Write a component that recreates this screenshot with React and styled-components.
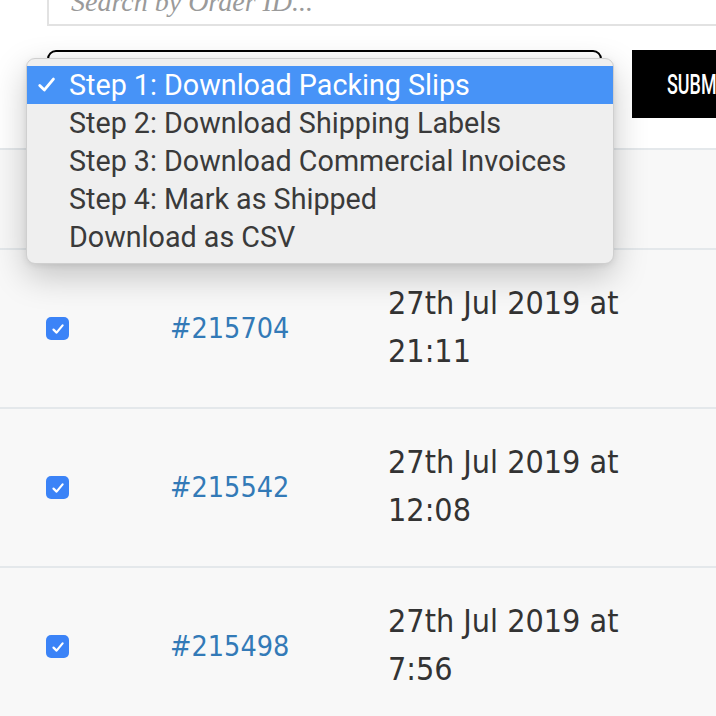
import React from 'react';
import styled, { createGlobalStyle } from 'styled-components';

const GlobalStyle = createGlobalStyle`
  html, body {
    margin: 0;
    padding: 0;
    background: #ffffff;
    overflow: hidden;
  }
  #root {
    width: 716px;
    height: 716px;
    overflow: hidden;
  }
`;

const actions = [
  'Step 1: Download Packing Slips',
  'Step 2: Download Shipping Labels',
  'Step 3: Download Commercial Invoices',
  'Step 4: Mark as Shipped',
  'Download as CSV',
];

const orders = [
  { id: '#215704', date: '27th Jul 2019 at 21:11' },
  { id: '#215542', date: '27th Jul 2019 at 12:08' },
  { id: '#215498', date: '27th Jul 2019 at 7:56' },
];

function CheckIcon({ color = '#fff', size = 14, weight = 2.2 }) {
  return (
    <svg width={size} height={size} viewBox="0 0 14 14" fill="none">
      <path d="M2.5 7.6 L5.6 10.6 L11.6 3.4" stroke={color} strokeWidth={weight} strokeLinecap="round" strokeLinejoin="round" />
    </svg>
  );
}

function App() {
  return (
    <Page>
      <GlobalStyle />
      <TopArea>
        <SearchInput placeholder="Search by Order ID..." />
        <ActionRow>
          <SelectWrap>
            <SelectBox />
            <Menu>
              {actions.map((a, i) => (
                <MenuItem key={a} selected={i === 0}>
                  {i === 0 && (
                    <Tick>
                      <CheckIcon size={21} weight={1.9} />
                    </Tick>
                  )}
                  {a}
                </MenuItem>
              ))}
            </Menu>
          </SelectWrap>
          <SubmitButton>
            <SubmitLabel>SUBMIT</SubmitLabel>
          </SubmitButton>
        </ActionRow>
      </TopArea>
      <Table>
        <HeaderRow />
        {orders.map((o) => (
          <Row key={o.id}>
            <Cell>
              <Checkbox>
                <CheckIcon />
              </Checkbox>
            </Cell>
            <Cell>
              <OrderLink href="#">{o.id}</OrderLink>
            </Cell>
            <DateCell>{o.date}</DateCell>
          </Row>
        ))}
      </Table>
    </Page>
  );
}

export default App;

const Page = styled.div`
  width: 716px;
  height: 716px;
  overflow: hidden;
  background: #f8f8f8;
  font-family: "DejaVu Sans Condensed", "DejaVu Sans", sans-serif;
`;

const TopArea = styled.div`
  background: #ffffff;
  padding: 0 0 30px 47px;
  margin-top: -30px;
`;

const SearchInput = styled.input`
  display: block;
  box-sizing: border-box;
  width: 720px;
  height: 56px;
  border: 2px solid #e2e2e2;
  background: #fff;
  padding: 8px 22px 0;
  font-family: "Liberation Serif", serif;
  font-style: italic;
  font-size: 28px;
  outline: none;
  &::placeholder {
    color: #9a9a9a;
  }
`;

const ActionRow = styled.div`
  display: flex;
  align-items: flex-start;
  margin-top: 24px;
  gap: 30px;
`;

const SelectWrap = styled.div`
  position: relative;
  width: 555px;
  height: 68px;
  flex-shrink: 0;
`;

const SelectBox = styled.div`
  box-sizing: border-box;
  width: 100%;
  height: 100%;
  border: 2px solid #000;
  border-radius: 9px;
  background: #fff;
`;

const Menu = styled.div`
  position: absolute;
  left: -21px;
  top: 8px;
  width: 588px;
  box-sizing: border-box;
  padding: 7px 0;
  background: #efefef;
  border: 1px solid #cfcfcf;
  border-radius: 9px;
  box-shadow: 0 12px 34px rgba(0, 0, 0, 0.22), 0 2px 6px rgba(0, 0, 0, 0.08);
  z-index: 10;
`;

const MenuItem = styled.div`
  position: relative;
  height: 38px;
  line-height: 38px;
  padding-left: 42px;
  font-family: Roboto, "Noto Sans", sans-serif;
  font-size: 28.7px;
  color: ${(p) => (p.selected ? '#ffffff' : '#3a3a3a')};
  background: ${(p) => (p.selected ? '#4793f7' : 'transparent')};
  white-space: nowrap;
`;

const Tick = styled.span`
  position: absolute;
  left: 9px;
  top: 8px;
  display: flex;
`;

const SubmitButton = styled.button`
  flex-shrink: 0;
  width: 140px;
  height: 68px;
  border: none;
  background: #000;
  color: #fff;
  text-align: left;
  padding: 0 0 0 35px;
  overflow: hidden;
`;

const SubmitLabel = styled.span`
  display: inline-block;
  font-family: Roboto, "Liberation Sans", sans-serif;
  font-weight: 500;
  font-size: 28px;
  transform: scaleX(0.64);
  transform-origin: left center;
`;

const Table = styled.div`
  border-top: 2px solid #e4e8eb;
`;

const HeaderRow = styled.div`
  height: 98px;
  border-bottom: 2px solid #e4e8eb;
`;

const Row = styled.div`
  display: grid;
  grid-template-columns: 170px 218px 260px;
  height: 157px;
  align-items: center;
  border-bottom: 2px solid #e4e8eb;
`;

const Cell = styled.div`
  &:first-child {
    padding-left: 46px;
  }
`;

const Checkbox = styled.span`
  display: flex;
  align-items: center;
  justify-content: center;
  width: 23px;
  height: 23px;
  border-radius: 5px;
  background: #3b83f7;
`;

const OrderLink = styled.a`
  color: #337ab7;
  text-decoration: none;
  font-size: 28.5px;
`;

const DateCell = styled.div`
  color: #333;
  font-size: 32px;
  line-height: 48px;
  margin-top: -4px;
`;
